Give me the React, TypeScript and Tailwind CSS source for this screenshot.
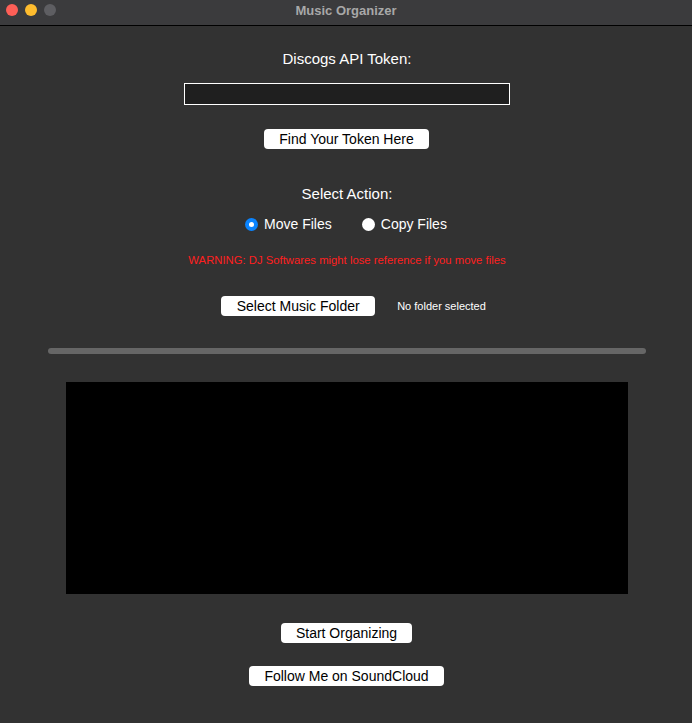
export default function App() {
  return (
    <div className="flex h-[723px] w-[692px] flex-col overflow-hidden bg-[#323232] font-['Liberation_Sans',Arial,sans-serif] text-white">
      <div className="relative flex h-[26px] shrink-0 justify-center border-b border-black bg-[#3b3b3d] pt-[3px]">
        <div className="absolute left-[6px] top-[4px] flex gap-[7px]">
          <span className="h-[12px] w-[12px] rounded-full bg-[#fe5f57]" />
          <span className="h-[12px] w-[12px] rounded-full bg-[#febc2e]" />
          <span className="h-[12px] w-[12px] rounded-full bg-[#5e5e62]" />
        </div>
        <span className="text-[13px] font-bold leading-[15px] text-[#a8a8a8]">Music Organizer</span>
      </div>

      <div className="flex flex-col items-center pl-[2px]">
        <p className="mt-[24px] h-[18px] text-[15px] leading-[18px]">Discogs API Token:</p>
        <input
          className="mt-[15px] h-[22px] w-[326px] border border-white bg-[#1f1f1f] outline-none"
          type="text"
        />
        <button className="mr-[1px] mt-[24px] h-[20px] w-[165px] rounded-[4px] bg-white text-[14px] leading-[20px] text-black">
          Find Your Token Here
        </button>

        <p className="mt-[36px] h-[18px] text-[15px] leading-[18px]">Select Action:</p>
        <div className="mr-[2px] mt-[12px] flex h-[18px] items-center gap-[30px] text-[14px]">
          <label className="flex items-center gap-[6px]">
            <span className="flex h-[13px] w-[13px] items-center justify-center rounded-full bg-[#0a84ff]">
              <span className="h-[5px] w-[5px] rounded-full bg-white" />
            </span>
            Move Files
          </label>
          <label className="flex items-center gap-[6px]">
            <span className="h-[13px] w-[13px] rounded-full bg-white" />
            Copy Files
          </label>
        </div>

        <p className="mt-[20px] h-[14px] text-[11.3px] leading-[14px] text-[#ff1f1f]">
          WARNING: DJ Softwares might lose reference if you move files
        </p>

        <div className="mt-[29px] flex h-[20px] items-center gap-[22px] pl-[13px]">
          <button className="h-[20px] w-[154px] rounded-[4px] bg-white text-[14px] leading-[20px] text-black">
            Select Music Folder
          </button>
          <span className="text-[11px]">No folder selected</span>
        </div>

        <div className="mt-[32px] h-[6px] w-[598px] rounded-full bg-[#666666]" />

        <div className="mt-[28px] h-[212px] w-[562px] bg-black" />

        <button className="mr-[1px] mt-[29px] h-[20px] w-[131px] rounded-[4px] bg-white text-[14px] leading-[20px] text-black">
          Start Organizing
        </button>
        <button className="mr-[1px] mt-[23px] h-[20px] w-[195px] rounded-[4px] bg-white text-[14px] leading-[20px] text-black">
          Follow Me on SoundCloud
        </button>
      </div>
    </div>
  );
}
